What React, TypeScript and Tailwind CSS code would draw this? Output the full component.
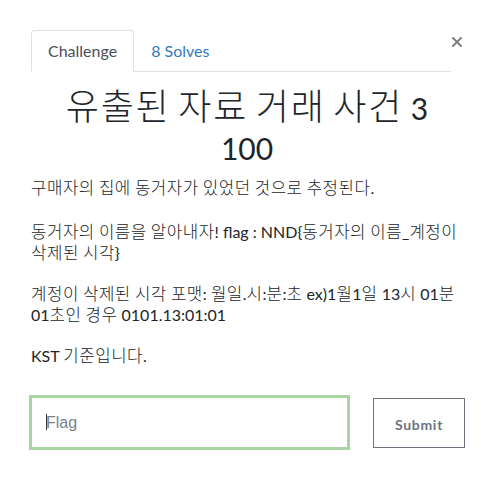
import React from "react";

const HANGUL_SPLIT = /([\u3131-\u318E\uAC00-\uD7A3]+)/;
const HANGUL_TEST = /^[\u3131-\u318E\uAC00-\uD7A3]+$/;

function T({ text, k }: { text: string; k: string }) {
  return (
    <>
      {text.split(HANGUL_SPLIT).map((part, i) =>
        HANGUL_TEST.test(part) ? (
          <span key={i} className={k}>
            {part}
          </span>
        ) : (
          <React.Fragment key={i}>{part}</React.Fragment>
        )
      )}
    </>
  );
}

const TITLE_K = "text-[36px] leading-none font-light tracking-[1.8px]";
const BODY_K = "text-[16.8px] leading-none font-light tracking-[0.5px]";

export default function App() {
  return (
    <div className="w-[494px] h-[498px] bg-white text-[#212529] font-['Lato','Noto_Sans_CJK_KR',sans-serif]">
      <div className="flex items-start pt-[30px] pl-[31px]">
        <ul className="w-[420px] flex border-b border-[#dee2e6]">
          <li className="-mb-px">
            <a className="block px-4 py-2 text-[16px] leading-6 text-[#495057] bg-white border border-[#dee2e6] border-b-white rounded-t-[4px]">
              Challenge
            </a>
          </li>
          <li className="-mb-px">
            <a className="block px-4 py-2 text-[16px] leading-6 text-[#337ab7] border border-transparent">
              8 Solves
            </a>
          </li>
        </ul>
        <button className="ml-px mt-[7px] w-[10px] h-[10px]" aria-label="Close">
          <svg width="10" height="10" viewBox="0 0 10 10">
            <path d="M1 1L9 9M9 1L1 9" stroke="#808080" strokeWidth="2" strokeLinecap="square" />
          </svg>
        </button>
      </div>

      <div className="px-[31px] pt-[16px]">
        <h3 className="text-center text-[30px] leading-[38px]">
          <T text="유출된 자료 거래 사건 3" k={TITLE_K} />
        </h3>
        <h4 className="mt-[3px] text-center text-[30px] leading-[36px]">100</h4>

        <div className="mt-[11px] text-[16px] leading-[21px]">
          <p className="mb-[23px]">
            <T text="구매자의 집에 동거자가 있었던 것으로 추정된다." k={BODY_K} />
          </p>
          <p className="mb-5">
            <T text="동거자의 이름을 알아내자! flag : NND{동거자의 이름_계정이 삭제된 시각}" k={BODY_K} />
          </p>
          <p className="mb-5">
            <T text="계정이 삭제된 시각 포맷: 월일.시:분:초 ex)1월1일 13시 01분 01초인 경우 0101.13:01:01" k={BODY_K} />
          </p>
          <p>
            <T text="KST 기준입니다." k={BODY_K} />
          </p>
        </div>
      </div>

      <div className="flex items-center pl-[29px] mt-[29px]">
        <div className="relative w-[321px] h-[55px] border-[3px] border-[#a8d6a2] bg-white">
          <input
            className="w-full h-full pl-[14px] text-[16px] font-['Liberation_Sans',sans-serif] text-[#495057] placeholder:text-[#7b8188] outline-none"
            placeholder="Flag"
          />
          <span className="absolute left-[14px] top-[16px] w-px h-[16px] bg-[#333]" />
        </div>
        <button className="ml-[23px] w-[92px] h-[50px] pt-[3px] border border-[#6c757d] text-[14px] font-bold tracking-[0.7px] text-[#6c757d]">
          Submit
        </button>
      </div>
    </div>
  );
}
